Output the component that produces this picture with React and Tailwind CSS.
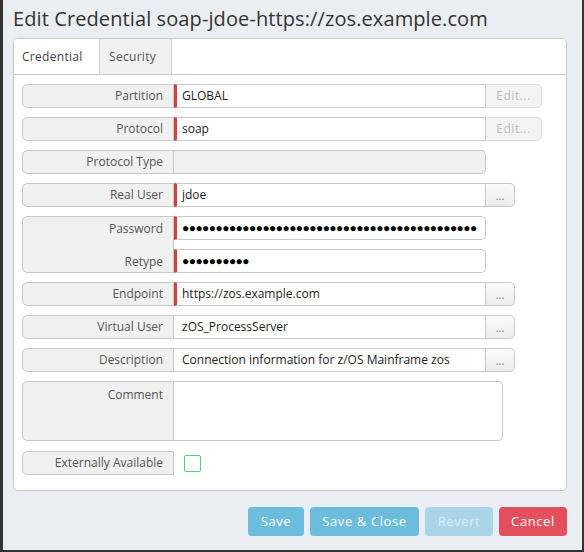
import React from "react";

const font = { fontFamily: '"Open Sans", "Liberation Sans", sans-serif' };

function Label({ children, className = "" }) {
  return (
    <div
      className={
        "w-[152px] shrink-0 border border-[#c8c8c8] rounded-l-[5px] bg-[#f0f0f0] text-[12px] text-[#555] flex justify-end pr-[10px] " +
        className
      }
    >
      {children}
    </div>
  );
}

function Field({ value, required, width = "w-[312px]", rounded = true, disabled }) {
  return (
    <div
      className={
        width +
        " h-full border-y border-r border-[#c8c8c8] flex items-center text-[12px] text-[#222] " +
        (required ? "border-l-[3px] border-l-[#d0413c] pl-[5px] " : "pl-[8px] ") +
        (rounded ? "rounded-r-[5px] " : "") +
        (disabled ? "bg-[#f0f0f0]" : "bg-white")
      }
    >
      {value}
    </div>
  );
}

function DotsBtn() {
  return (
    <div className="w-[29px] h-full border border-l-0 border-[#c8c8c8] rounded-r-[5px] bg-gradient-to-b from-[#fbfbfb] to-[#ececec] flex items-center justify-center text-[11px] text-[#777] leading-none">
      ...
    </div>
  );
}

function EditBtn() {
  return (
    <div className="w-[56px] h-full border border-l-0 border-[#dcdcdc] rounded-r-[5px] bg-[#f3f3f3] flex items-center justify-center text-[12px] text-[#bdbdbd] tracking-[0.5px]">
      Edit...
    </div>
  );
}

function Row({ label, children }) {
  return (
    <div className="flex h-[24px]">
      <Label className="items-center">{label}</Label>
      {children}
    </div>
  );
}

export default function App() {
  return (
    <div className="w-[584px] h-[552px] bg-[#333] pl-[3px] pr-[2px] pb-[2px]" style={font}>
      <div className="h-full bg-[#eaedf1] pl-[10px] pr-[15px] pt-[6px]">
        <div className="text-[20px] leading-[26px] text-[#333] tracking-[0.1px]">
          Edit Credential soap-jdoe-https://zos.example.com
        </div>
        <div className="mt-[6px] h-[453px] bg-white border border-[#c8c8c8] rounded-[5px] overflow-hidden">
          <div className="flex h-[36px] border-b border-[#c8c8c8] bg-white">
            <div className="w-[86px] border-r border-[#d4d4d4] bg-white flex items-center pl-[8px] text-[12px] text-[#444] tracking-[0.3px]">
              Credential
            </div>
            <div className="w-[72px] border-r border-[#d4d4d4] bg-[#f1f1f1] flex items-center pl-[9px] text-[12px] text-[#555] tracking-[0.3px]">
              Security
            </div>
          </div>
          <div className="pl-[8px] pt-[9px] flex flex-col gap-[9px]">
            <Row label="Partition">
              <Field value="GLOBAL" required rounded={false} />
              <EditBtn />
            </Row>
            <Row label="Protocol">
              <Field value="soap" required rounded={false} />
              <EditBtn />
            </Row>
            <Row label="Protocol Type">
              <Field value="" disabled />
            </Row>
            <Row label="Real User">
              <Field value="jdoe" required rounded={false} />
              <DotsBtn />
            </Row>
            <div className="flex h-[57px]">
              <div className="w-[152px] shrink-0 border border-[#c8c8c8] rounded-l-[5px] bg-[#f0f0f0] text-[12px] text-[#555] flex flex-col items-end justify-between pr-[10px] pt-[3px] pb-[1px]">
                <span>Password</span>
                <span>Retype</span>
              </div>
              <div className="flex flex-col justify-between">
                <div className="h-[24px]">
                  <Field
                    required
                    value={
                      <span className="text-[12px] tracking-[-0.55px] text-black">
                        {"●".repeat(44)}
                      </span>
                    }
                  />
                </div>
                <div className="h-[24px]">
                  <Field
                    required
                    value={
                      <span className="text-[12px] tracking-[-0.55px] text-black">
                        {"●".repeat(10)}
                      </span>
                    }
                  />
                </div>
              </div>
            </div>
            <Row label="Endpoint">
              <Field value="https://zos.example.com" required rounded={false} />
              <DotsBtn />
            </Row>
            <Row label="Virtual User">
              <Field value="zOS_ProcessServer" rounded={false} />
              <DotsBtn />
            </Row>
            <Row label="Description">
              <Field value="Connection information for z/OS Mainframe zos" rounded={false} />
              <DotsBtn />
            </Row>
            <div className="flex h-[60px]">
              <Label className="items-start pt-[4px]">Comment</Label>
              <div className="w-[329px] h-full border-y border-r border-[#c8c8c8] rounded-r-[5px] bg-white" />
            </div>
            <div className="flex h-[24px] mt-[1px]">
              <Label className="items-center">Externally Available</Label>
              <div className="flex items-center pl-[10px]">
                <div className="w-[17px] h-[17px] border border-[#5fc77a] rounded-[2px] bg-white" />
              </div>
            </div>
          </div>
        </div>
        <div className="flex justify-end gap-[6px] mt-[16px] text-[13px] text-white tracking-[0.6px]">
          <div className="w-[56px] h-[29px] rounded-[4px] bg-[#6cbddd] flex items-center justify-center">Save</div>
          <div className="w-[109px] h-[29px] rounded-[4px] bg-[#6cbddd] flex items-center justify-center">Save &amp; Close</div>
          <div className="w-[68px] h-[29px] rounded-[4px] bg-[#aad5e8] text-[#d9edf6] flex items-center justify-center">Revert</div>
          <div className="w-[68px] h-[29px] rounded-[4px] bg-[#e2505e] flex items-center justify-center">Cancel</div>
        </div>
      </div>
    </div>
  );
}
